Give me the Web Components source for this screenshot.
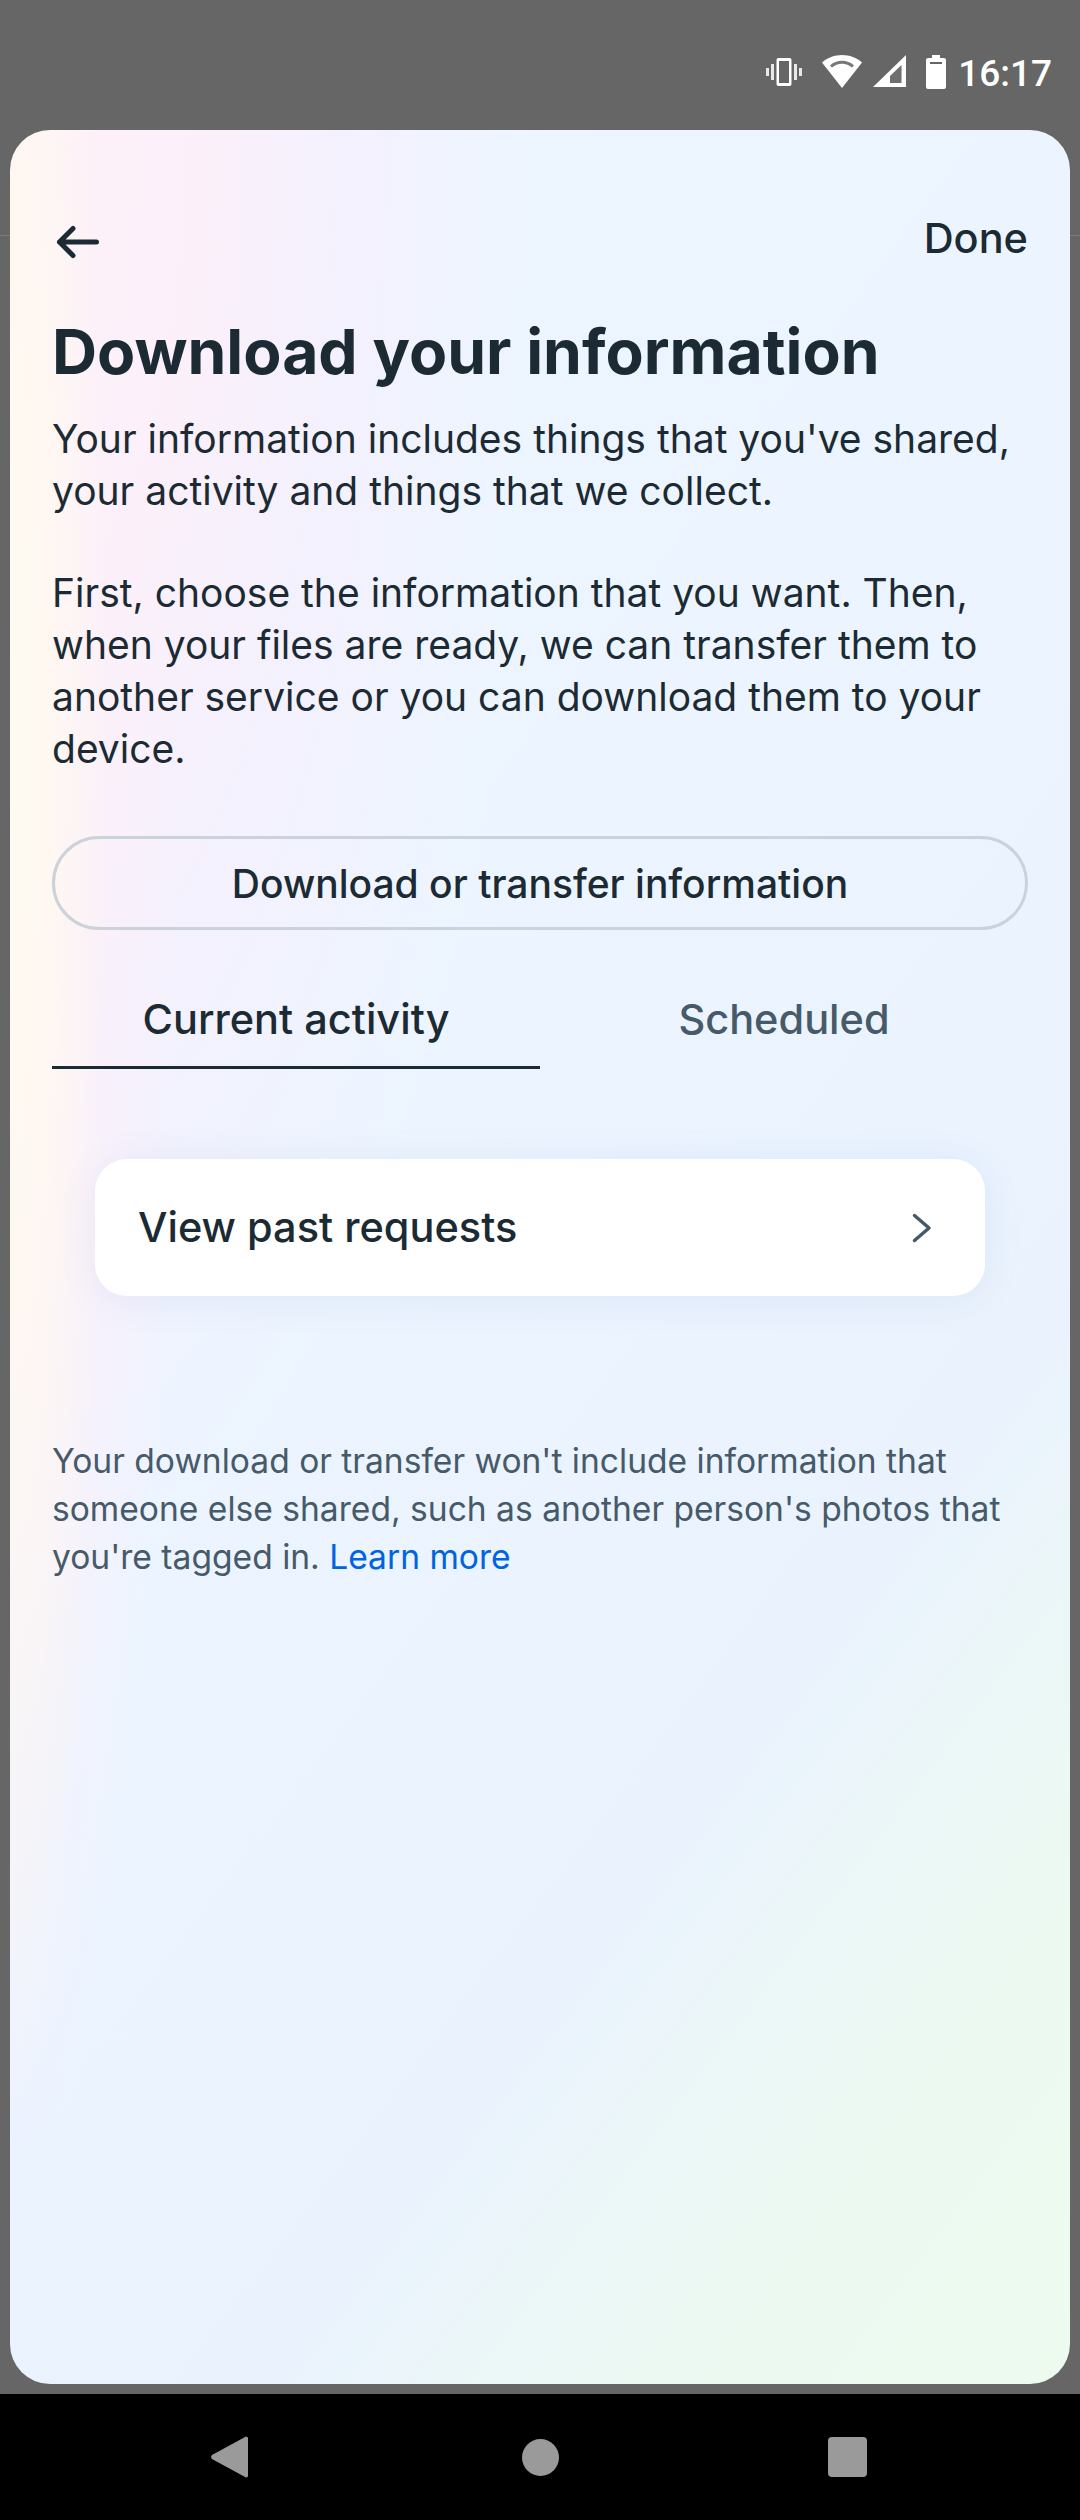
<!DOCTYPE html>
<html>
<head>
<meta charset="utf-8">
<style>
  html, body { margin: 0; height: 100%; background: #666; }
  body { font-family: Inter, "Noto Sans", sans-serif; }
</style>
</head>
<body>
<dyi-screen>
  <status-bar slot="status"></status-bar>
  <sheet-panel slot="sheet">
    <top-bar></top-bar>
    <h-title>Download your information</h-title>
    <body-text>Your information includes things that you've shared, your activity and things that we collect.</body-text>
    <body-text gap>First, choose the information that you want. Then, when your files are ready, we can transfer them to another service or you can download them to your device.</body-text>
    <outline-button>Download or transfer information</outline-button>
    <tab-row></tab-row>
    <link-card>View past requests</link-card>
    <foot-note>Your download or transfer won't include information that someone else shared, such as another person's photos that you're tagged in. <a>Learn more</a></foot-note>
  </sheet-panel>
  <nav-bar slot="nav"></nav-bar>
</dyi-screen>

<script>
class DyiScreen extends HTMLElement {
  constructor() {
    super();
    this.attachShadow({ mode: 'open' }).innerHTML = `
    <style>
      :host { display: flex; flex-direction: column; height: 2520px; width: 1080px; background: #666; position: relative; overflow: hidden; }
      .line { position: absolute; left: 0; right: 0; top: 235px; height: 1px; background: #7b7b7b; }
      .status { height: 130px; flex: none; }
      .sheet { flex: none; height: 2254px; padding: 0 10px; position: relative; }
      .gap { flex: none; height: 10px; }
      .nav { flex: 1; }
    </style>
    <div class="line"></div>
    <div class="status"><slot name="status"></slot></div>
    <div class="sheet"><slot name="sheet"></slot></div>
    <div class="gap"></div>
    <div class="nav"><slot name="nav"></slot></div>`;
  }
}

class StatusBar extends HTMLElement {
  constructor() {
    super();
    this.attachShadow({ mode: 'open' }).innerHTML = `
    <style>
      :host { display: flex; height: 130px; align-items: flex-start; justify-content: flex-end; padding: 55px 28px 0 0; box-sizing: border-box; color: #fff; }
      svg { display: block; fill: #fff; }
      .time { font: 500 37px/1 Roboto, sans-serif; margin-left: 12px; margin-top: 0; }
    </style>
    <svg width="36" height="28" viewBox="0 0 36 28" style="margin-top:3px">
      <path d="M0 10h3v8H0zM5 6h3v16H5zM28 6h3v16h-3zM33 10h3v8h-3z" fill-opacity=".85"/>
      <path fill-rule="evenodd" d="M12.500 0h11a2 2 0 0 1 2 2v24a2 2 0 0 1-2 2h-11a2 2 0 0 1-2-2V2a2 2 0 0 1 2-2zm.5 3v22h10V3z"/>
    </svg>
    <svg width="40" height="33" viewBox="0 0 40 33" style="margin-left:20px">
      <path d="M20 0C12.500 0 5.500 2.700 0 7.500L20 33 40 7.500C34.500 2.700 27.500 0 20 0z"/>
      <path d="M9 11.500C12 8.800 15.800 7.300 20 7.300s8 1.500 11 4.200" fill="none" stroke="#777" stroke-width="3"/>
    </svg>
    <svg width="33" height="33" viewBox="0 0 33 33" style="margin-left:11px">
      <path d="M33 0v32H0z"/>
      <path d="M28.500 10 17 21v7h11.500z" fill="#6f6f6f"/>
    </svg>
    <svg width="20" height="34" viewBox="0 0 20 34" style="margin-left:20px">
      <path fill-rule="evenodd" d="M6 0h8v3h4a2 2 0 0 1 2 2v27a2 2 0 0 1-2 2H2a2 2 0 0 1-2-2V5a2 2 0 0 1 2-2h4zM4 7v2h12V7z"/>
    </svg>
    <span class="time">16:17</span>`;
  }
}

class SheetPanel extends HTMLElement {
  constructor() {
    super();
    this.attachShadow({ mode: 'open' }).innerHTML = `
    <style>
      :host {
        display: block; height: 2254px; box-sizing: border-box;
        padding: 0 42px; border-radius: 40px; overflow: hidden;
        background:
          radial-gradient(ellipse 100px 1400px at 0 600px, #fffbf0 0, rgba(255,249,240,.75) 45%, rgba(255,245,245,0) 100%),
          radial-gradient(ellipse 170px 1400px at 0 700px, #fdf0f8 0, rgba(252,240,250,.7) 50%, rgba(245,240,253,0) 100%),
          radial-gradient(ellipse 540px 1500px at 0 0, #fdf0f8 0, #fcf0fa 32%, rgba(245,240,253,.8) 62%, rgba(236,244,255,0) 100%),
          linear-gradient(127deg, #edf6ff 0, #ecf5ff 38%, #eaf3fe 60%, #eaf3fd 71%, #ecf9f2 85%, #edfbef 100%);
      }
    </style>
    <slot></slot>`;
  }
}

class TopBar extends HTMLElement {
  constructor() {
    super();
    this.attachShadow({ mode: 'open' }).innerHTML = `
    <style>
      :host { display: flex; justify-content: space-between; align-items: center; height: 44px; margin-top: 86px; color: #1c2b33; }
      svg { display: block; margin: 7px 0 0 1px; }
      span { font: 500 41.500px/44px Inter, sans-serif; }
    </style>
    <svg width="50" height="34" viewBox="0 0 50 34" fill="none" stroke="#1c2b33" stroke-width="5" stroke-linecap="round" stroke-linejoin="round">
      <path d="M43.500 17H6.500M20 3.500 6.500 17 20 30.500"/>
    </svg>
    <span>Done</span>`;
  }
}

class HTitle extends HTMLElement {
  constructor() {
    super();
    this.attachShadow({ mode: 'open' }).innerHTML = `
    <style>
      :host { display: block; margin-top: 54px; color: #1c2b33; font: 700 62.400px/76px Inter, sans-serif; white-space: nowrap; }
    </style>
    <slot></slot>`;
  }
}

class BodyText extends HTMLElement {
  constructor() {
    super();
    this.attachShadow({ mode: 'open' }).innerHTML = `
    <style>
      :host { display: block; margin-top: 23px; color: #1c2b33; font: 400 39px/52px Inter, sans-serif; }
      :host([gap]) { margin-top: 50px; }
    </style>
    <slot></slot>`;
  }
}

class OutlineButton extends HTMLElement {
  constructor() {
    super();
    this.attachShadow({ mode: 'open' }).innerHTML = `
    <style>
      :host { display: flex; align-items: center; justify-content: center; box-sizing: border-box; height: 94px; margin-top: 61px; border: 3px solid #cbd2d9; border-radius: 47px; color: #1c2b33; font: 500 39px/1 Inter, sans-serif; }
    </style>
    <slot></slot>`;
  }
}

class TabRow extends HTMLElement {
  constructor() {
    super();
    this.attachShadow({ mode: 'open' }).innerHTML = `
    <style>
      :host { display: grid; grid-template-columns: 1fr 1fr; height: 139px; font: 500 41.500px/1 Inter, sans-serif; }
      div { display: flex; align-items: center; justify-content: center; box-sizing: border-box; padding-top: 44px; color: #465a69; }
      .on { color: #1c2b33; border-bottom: 3px solid #1c2b33; }
      .off { padding-bottom: 3px; }
    </style>
    <div class="on">Current activity</div>
    <div class="off">Scheduled</div>`;
  }
}

class LinkCard extends HTMLElement {
  constructor() {
    super();
    this.attachShadow({ mode: 'open' }).innerHTML = `
    <style>
      :host { display: flex; align-items: center; justify-content: space-between; box-sizing: border-box; height: 137px; margin: 90px 43px 0; padding: 0 52px 0 43px; background: #fff; border-radius: 32px; box-shadow: 0 4px 40px rgba(60,90,160,.08); color: #1c2b33; font: 500 41.500px/1 Inter, sans-serif; }
      svg { display: block; }
    </style>
    <span><slot></slot></span>
    <svg width="22" height="30" viewBox="0 0 22 30" fill="none" stroke="#465a69" stroke-width="3.500" stroke-linecap="round" stroke-linejoin="round">
      <path d="M3.500 2.500 18 15 3.500 27.500"/>
    </svg>`;
  }
}

class FootNote extends HTMLElement {
  constructor() {
    super();
    this.attachShadow({ mode: 'open' }).innerHTML = `
    <style>
      :host { display: block; margin-top: 141px; color: #465a69; font: 400 33.600px/48px Inter, sans-serif; }
      ::slotted(a) { color: #0064e0; }
    </style>
    <slot></slot>`;
  }
}

class NavBar extends HTMLElement {
  constructor() {
    super();
    this.attachShadow({ mode: 'open' }).innerHTML = `
    <style>
      :host { display: flex; height: 126px; background: #000; align-items: center; justify-content: center; }
      svg { display: block; fill: #9a9a9a; }
      .row { display: grid; grid-template-columns: repeat(3, 307px); justify-items: center; align-items: center; }
    </style>
    <div class="row">
      <svg width="37" height="42" viewBox="0 0 37 42" style="margin-right:7px"><path d="M35 .5a2 2 0 0 1 2 1.500v38a2 2 0 0 1-2 1.500L1 23a3 3 0 0 1 0-4z"/></svg>
      <svg width="37" height="37" viewBox="0 0 37 37"><circle cx="18.500" cy="18.500" r="18.500"/></svg>
      <svg width="39" height="40" viewBox="0 0 39 40"><rect width="39" height="40" rx="4"/></svg>
    </div>`;
  }
}

customElements.define('dyi-screen', DyiScreen);
customElements.define('status-bar', StatusBar);
customElements.define('sheet-panel', SheetPanel);
customElements.define('top-bar', TopBar);
customElements.define('h-title', HTitle);
customElements.define('body-text', BodyText);
customElements.define('outline-button', OutlineButton);
customElements.define('tab-row', TabRow);
customElements.define('link-card', LinkCard);
customElements.define('foot-note', FootNote);
customElements.define('nav-bar', NavBar);
</script>
</body>
</html>
